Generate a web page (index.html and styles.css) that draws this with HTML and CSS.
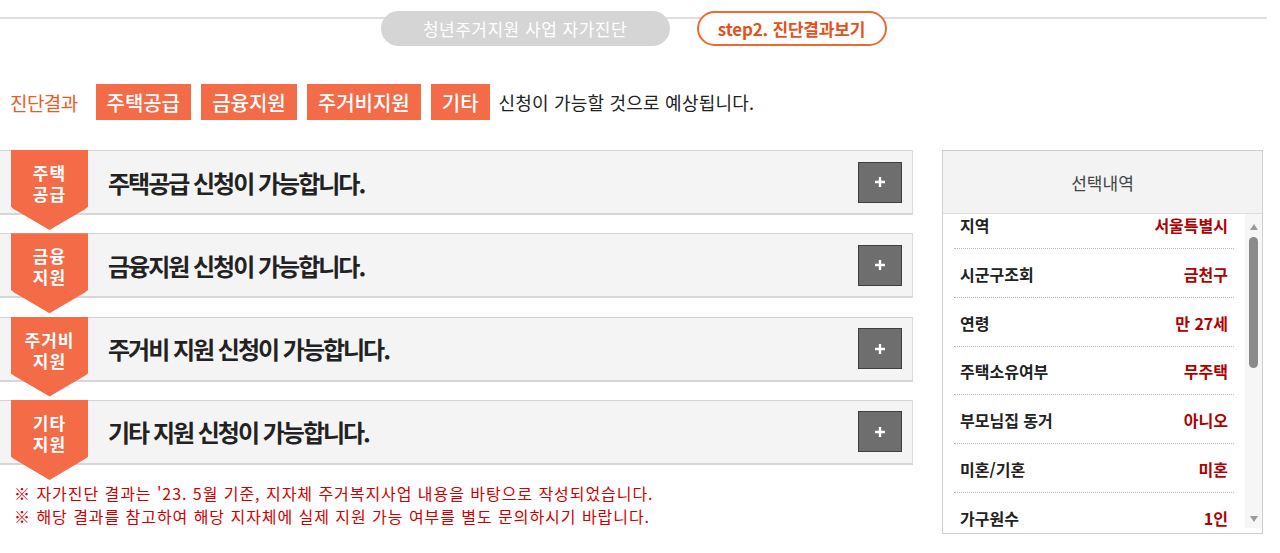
FILE: index.html
```html
<!DOCTYPE html>
<html lang="ko">
<head>
<meta charset="utf-8">
<title>청년주거지원 사업 자가진단</title>
<link rel="stylesheet" href="styles.css">
</head>
<body>
<div class="page">
  <div class="steps">
    <div class="step step-off">청년주거지원 사업 자가진단</div>
    <div class="step step-on">step2. 진단결과보기</div>
  </div>

  <div class="summary">
    <span class="summary-label">진단결과</span>
    <span class="tag">주택공급</span>
    <span class="tag">금융지원</span>
    <span class="tag">주거비지원</span>
    <span class="tag">기타</span>
    <span class="summary-text">신청이 가능할 것으로 예상됩니다.</span>
  </div>

  <div class="main">
    <div class="results">
      <div class="result">
        <div class="badge"><span class="badge-line">주택</span><span class="badge-line">공급</span></div>
        <h3 class="result-title">주택공급 신청이 가능합니다.</h3>
        <button class="plus" type="button"><svg width="12" height="12" viewBox="0 0 12 12"><path d="M6 1v10M1 6h10" stroke="#fff" stroke-width="2.4"/></svg></button>
      </div>
      <div class="result">
        <div class="badge"><span class="badge-line">금융</span><span class="badge-line">지원</span></div>
        <h3 class="result-title">금융지원 신청이 가능합니다.</h3>
        <button class="plus" type="button"><svg width="12" height="12" viewBox="0 0 12 12"><path d="M6 1v10M1 6h10" stroke="#fff" stroke-width="2.4"/></svg></button>
      </div>
      <div class="result">
        <div class="badge"><span class="badge-line">주거비</span><span class="badge-line">지원</span></div>
        <h3 class="result-title">주거비 지원 신청이 가능합니다.</h3>
        <button class="plus" type="button"><svg width="12" height="12" viewBox="0 0 12 12"><path d="M6 1v10M1 6h10" stroke="#fff" stroke-width="2.4"/></svg></button>
      </div>
      <div class="result">
        <div class="badge"><span class="badge-line">기타</span><span class="badge-line">지원</span></div>
        <h3 class="result-title">기타 지원 신청이 가능합니다.</h3>
        <button class="plus" type="button"><svg width="12" height="12" viewBox="0 0 12 12"><path d="M6 1v10M1 6h10" stroke="#fff" stroke-width="2.4"/></svg></button>
      </div>
      <div class="notes">
        <p>※ 자가진단 결과는 '23. 5월 기준, 지자체 주거복지사업 내용을 바탕으로 작성되었습니다.</p>
        <p>※ 해당 결과를 참고하여 해당 지자체에 실제 지원 가능 여부를 별도 문의하시기 바랍니다.</p>
      </div>
    </div>

    <aside class="panel">
      <div class="panel-head">선택내역</div>
      <div class="panel-body">
        <div class="list-view">
          <ul class="list">
            <li class="row"><span class="row-label">지역</span><span class="row-value">서울특별시</span></li>
            <li class="row"><span class="row-label">시군구조회</span><span class="row-value">금천구</span></li>
            <li class="row"><span class="row-label">연령</span><span class="row-value">만 27세</span></li>
            <li class="row"><span class="row-label">주택소유여부</span><span class="row-value">무주택</span></li>
            <li class="row"><span class="row-label">부모님집 동거</span><span class="row-value">아니오</span></li>
            <li class="row"><span class="row-label">미혼/기혼</span><span class="row-value">미혼</span></li>
            <li class="row"><span class="row-label">가구원수</span><span class="row-value">1인</span></li>
          </ul>
        </div>
        <div class="scrollbar">
          <span class="arrow arrow-up"></span>
          <div class="track"><span class="thumb"></span></div>
          <span class="arrow arrow-down"></span>
        </div>
      </div>
    </aside>
  </div>
</div>
</body>
</html>
```

FILE: styles.css
```css
* { box-sizing: border-box; }
html, body { margin: 0; padding: 0; background: #fff; }
body {
  font-family: "Noto Sans CJK KR", "Noto Sans", sans-serif;
  color: #222;
  overflow: hidden;
}
.page { width: 1267px; }

.steps {
  display: flex;
  justify-content: center;
  gap: 27px;
  padding-top: 11px;
  background-image: linear-gradient(#dedede, #dedede);
  background-repeat: no-repeat;
  background-size: 100% 2px;
  background-position: 0 17px;
}
.step {
  height: 35px;
  border-radius: 18px;
  display: flex;
  align-items: center;
  justify-content: center;
  font-size: 17px;
  line-height: 1;
}
.step-off {
  width: 289px;
  background: #d5d5d5;
  color: #fff;
  letter-spacing: 0.5px;
}
.step-on {
  width: 190px;
  background: #fff;
  border: 2px solid #f0672f;
  color: #e4521c;
  font-weight: 700;
  letter-spacing: -0.2px;
}

.summary {
  display: flex;
  align-items: center;
  margin-top: 38px;
  padding-left: 10px;
  height: 36px;
}
.summary-label {
  color: #ee5a24;
  font-size: 19px;
  letter-spacing: -0.6px;
  margin-right: 18px;
}
.tag {
  height: 36px;
  display: flex;
  align-items: center;
  padding: 0 11px;
  background: #f46b47;
  color: #fff;
  font-size: 20px;
  font-weight: 500;
  margin-right: 10px;
}
.summary-text {
  font-size: 18px;
  letter-spacing: 0.2px;
  color: #222;
  margin-left: -1px;
}

.main {
  display: flex;
  align-items: flex-start;
  margin-top: 30px;
}
.results {
  width: 913px;
  display: flex;
  flex-direction: column;
  gap: 18.3px;
}
.result {
  position: relative;
  height: 65px;
  display: flex;
  align-items: center;
  background: #f4f4f4;
  border-top: 1px solid #d3d3d3;
  border-right: 1px solid #dcdcdc;
  border-bottom: 2px solid #d6d6d6;
}
.badge {
  position: absolute;
  left: 11px;
  top: -1px;
  width: 77px;
  height: 80px;
  padding-top: 12px;
  background: #f46b47;
  color: #fff;
  font-size: 17px;
  font-weight: 700;
  line-height: 21px;
  text-align: center;
  letter-spacing: 1px;
  display: flex;
  flex-direction: column;
  align-items: center;
  clip-path: polygon(0 0, 100% 0, 100% 71%, 96% 74%, 50% 100%, 4% 74%, 0 71%);
  z-index: 2;
}
.badge-line { display: block; height: 21px; }
.result-title {
  margin: 0 0 0 108px;
  font-size: 24px;
  font-weight: 700;
  letter-spacing: -2px;
  color: #222;
}
.plus {
  margin-left: auto;
  margin-right: 10px;
  width: 44px;
  height: 41px;
  padding: 0;
  border: 1px solid #3f3f3f;
  background: #6e6e6e;
  display: flex;
  align-items: center;
  justify-content: center;
}
.plus svg { display: block; }

.notes {
  margin-top: -1px;
  padding-left: 14px;
}
.notes p {
  margin: 0;
  color: #d10000;
  font-size: 16px;
  line-height: 23px;
  letter-spacing: 0.95px;
}

.panel {
  margin-left: 29px;
  width: 321px;
  height: 384px;
  border: 1px solid #cfcfcf;
  display: flex;
  flex-direction: column;
}
.panel-head {
  height: 63px;
  flex: none;
  background: #f3f3f3;
  border-bottom: 1px solid #dedede;
  display: flex;
  align-items: center;
  justify-content: center;
  font-size: 17px;
  color: #444;
}
.panel-body {
  flex: 1;
  display: flex;
  min-height: 0;
  padding-bottom: 5px;
}
.list-view {
  flex: 1;
  overflow: hidden;
}
.list {
  list-style: none;
  margin: -14px 0 0;
  padding: 0 11px;
}
.row {
  height: 48.85px;
  display: flex;
  align-items: center;
  justify-content: space-between;
  padding: 2px 6px 0;
  border-bottom: 1px dotted #bdbdbd;
  font-size: 16px;
  font-weight: 700;
  letter-spacing: 0;
}
.row-label { color: #222; }
.row-value { color: #b00000; }

.scrollbar {
  width: 17px;
  flex: none;
  background: #f6f6f6;
  display: flex;
  flex-direction: column;
  align-items: center;
  padding: 10px 0 6px;
}
.arrow {
  width: 0;
  height: 0;
  border-left: 4px solid transparent;
  border-right: 4px solid transparent;
  flex: none;
}
.arrow-up { border-bottom: 6px solid #9a9a9a; }
.arrow-down { border-top: 6px solid #9a9a9a; }
.track {
  flex: 1;
  width: 100%;
  display: flex;
  justify-content: center;
  padding-top: 7px;
}
.thumb {
  width: 9px;
  height: 131px;
  border-radius: 5px;
  background: #8a8a8a;
}
```
